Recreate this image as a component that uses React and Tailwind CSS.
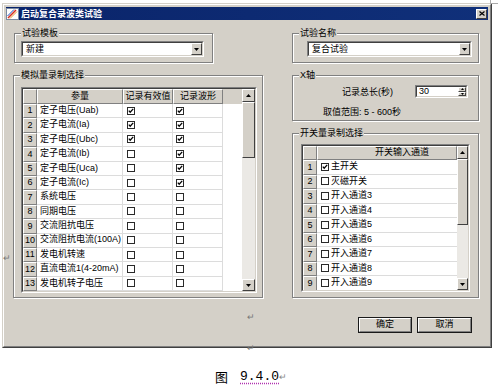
import React from "react";

const FONT = "font-['Liberation_Sans','Noto_Sans_CJK_SC',sans-serif]";
const raised =
  "border border-t-white border-l-white border-r-[#404040] border-b-[#404040] bg-[#d4d0c8]";
const cellRaised =
  "border border-t-white border-l-white border-r-[#808080] border-b-[#808080] bg-[#d4d0c8]";

const params = [
  { name: "定子电压(Uab)", value: true, wave: true },
  { name: "定子电流(Ia)", value: true, wave: true },
  { name: "定子电压(Ubc)", value: true, wave: true },
  { name: "定子电流(Ib)", value: false, wave: true },
  { name: "定子电压(Uca)", value: false, wave: true },
  { name: "定子电流(Ic)", value: false, wave: true },
  { name: "系统电压", value: false, wave: false },
  { name: "同期电压", value: false, wave: false },
  { name: "交流阻抗电压", value: false, wave: false },
  { name: "交流阻抗电流(100A)", value: false, wave: false },
  { name: "发电机转速", value: false, wave: false },
  { name: "直流电流1(4-20mA)", value: false, wave: false },
  { name: "发电机转子电压", value: false, wave: false },
];

const channels = [
  { name: "主开关", on: true },
  { name: "灭磁开关", on: false },
  { name: "开入通道3", on: false },
  { name: "开入通道4", on: false },
  { name: "开入通道5", on: false },
  { name: "开入通道6", on: false },
  { name: "开入通道7", on: false },
  { name: "开入通道8", on: false },
  { name: "开入通道9", on: false },
];

function Check({ on }) {
  return (
    <svg width="8" height="8" viewBox="0 0 8 8" className="shrink-0">
      <rect x="0.5" y="0.5" width="7" height="7" fill="#fff" stroke="#2a2a2a" />
      {on && <path d="M1.8 3.6 L3.2 5.2 L6.2 1.9" fill="none" stroke="#000" strokeWidth="1.3" />}
    </svg>
  );
}

function Tri({ up }) {
  return (
    <svg width="5" height="3" viewBox="0 0 5 3">
      <path d={up ? "M0 3H5L2.5 0Z" : "M0 0H5L2.5 3Z"} fill="#000" />
    </svg>
  );
}

function Group({ label, className, children }) {
  return (
    <div className={`relative border border-[#808080] shadow-[inset_1px_1px_0_#fff,1px_1px_0_#fff] ${className}`}>
      <span className="absolute -top-[7px] left-[6px] bg-[#d4d0c8] px-[1px] leading-[12px]">{label}</span>
      {children}
    </div>
  );
}

function Combo({ value, className }) {
  return (
    <div className={`border border-t-[#808080] border-l-[#808080] border-r-white border-b-white ${className}`}>
      <div className="flex h-full border border-t-[#404040] border-l-[#404040] border-r-[#d4d0c8] border-b-[#d4d0c8] bg-white">
        <span className="flex-1 pl-[3px] leading-[12px]">{value}</span>
        <div className={`flex w-[11px] items-center justify-center ${raised}`}>
          <Tri />
        </div>
      </div>
    </div>
  );
}

function ScrollBar({ width, thumb }) {
  return (
    <div className={`flex flex-col bg-[#ebe9e5] ${width}`}>
      <div className={`flex h-[13px] items-center justify-center ${raised}`}>
        <Tri up />
      </div>
      <div className={`${thumb} ${raised}`} />
      <div className="flex-1" />
      <div className={`flex h-[12px] items-center justify-center ${raised}`}>
        <Tri />
      </div>
    </div>
  );
}

function Button({ label, width }) {
  return (
    <div className={`h-[16px] ${width} border border-[#1a1a1a]`}>
      <div className="flex h-full items-center justify-center border border-t-white border-l-white border-r-[#808080] border-b-[#808080] bg-[#d4d0c8]">
        {label}
      </div>
    </div>
  );
}

export default function App() {
  return (
    <div className={`relative h-[390px] w-[498px] overflow-hidden bg-white text-[9px] text-black ${FONT}`}>
      <div className="ml-[2px] mt-[3px] h-[345px] w-[490px] border border-t-[#d4d0c8] border-l-[#d4d0c8] border-r-[#404040] border-b-[#404040] bg-[#d4d0c8]">
        <div className="h-full border border-t-white border-l-white border-r-[#808080] border-b-[#808080] p-[2px]">
          {/* title bar */}
          <div className="flex h-[13px] items-center bg-gradient-to-r from-[#0a246a] to-[#10307a] pr-[1px]">
            <svg width="13" height="12" viewBox="0 0 13 12" className="shrink-0">
              <rect x="0.5" y="0.5" width="12" height="11" fill="#fff" stroke="#7a8aa0" />
              <path d="M2 10 L10 2" stroke="#d83020" strokeWidth="1.6" />
              <path d="M4 10.5 L11 3.5" stroke="#e8a030" strokeWidth="1" />
              <path d="M1.5 8 L8 1.5" stroke="#2050c0" strokeWidth="1" />
            </svg>
            <span className="ml-[2px] font-bold leading-[12px] text-white">启动复合录波类试验</span>
            <div className={`ml-auto flex h-[10px] w-[11px] items-center justify-center ${raised}`}>
              <svg width="6" height="5" viewBox="0 0 6 5">
                <path d="M0.5 0.5 L5.5 4.5 M5.5 0.5 L0.5 4.5" stroke="#000" strokeWidth="1.2" />
              </svg>
            </div>
          </div>

          {/* body */}
          <div className="flex pl-[7px] pt-[13px]">
            <div className="w-[250px]">
              <Group label="试验模板" className="ml-[1px] h-[30px] w-[199px] pl-[6px] pt-[7px]">
                <Combo value="新建" className="h-[16px] w-[183px]" />
              </Group>

              <Group label="模拟量录制选择" className="mt-[12px] h-[223px] w-[250px] pl-[7px] pt-[11px]">
                <div className="h-[206px] w-[236px] border border-t-[#808080] border-l-[#808080] border-r-white border-b-white">
                  <div className="flex h-full border border-t-[#404040] border-l-[#404040] border-r-[#d4d0c8] border-b-[#d4d0c8]">
                    <div className="flex flex-1 flex-col overflow-hidden">
                      <div className="flex h-[15px] shrink-0">
                        <div className={`w-[14px] ${cellRaised}`} />
                        <div className={`flex w-[86px] items-center justify-center ${cellRaised}`}>参量</div>
                        <div className={`flex w-[50px] items-center justify-center ${cellRaised}`}>记录有效值</div>
                        <div className={`flex w-[50px] items-center justify-center ${cellRaised}`}>记录波形</div>
                        <div className="flex-1 bg-[#d4d0c8]" />
                      </div>
                      <div className="flex-1 overflow-hidden bg-white">
                        {params.map((p, i) => (
                          <div key={i} className="flex h-[14.4px]">
                            <div className={`flex w-[14px] items-center justify-center ${cellRaised}`}>{i + 1}</div>
                            <div className="flex w-[86px] items-center border-b border-r border-[#dcdcdc] pl-[3px] whitespace-nowrap">
                              {p.name}
                            </div>
                            <div className="flex w-[50px] items-center border-b border-r border-[#dcdcdc] pl-[4px]">
                              <Check on={p.value} />
                            </div>
                            <div className="flex w-[50px] items-center border-b border-r border-[#dcdcdc] pl-[3px]">
                              <Check on={p.wave} />
                            </div>
                            <div className="flex-1" />
                          </div>
                        ))}
                      </div>
                    </div>
                    <ScrollBar width="w-[13px]" thumb="h-[56px]" />
                  </div>
                </div>
              </Group>
            </div>

            <div className="ml-[29px] w-[187px]">
              <Group label="试验名称" className="h-[30px] w-[187px] pl-[14px] pt-[7px]">
                <Combo value="复合试验" className="h-[16px] w-[165px]" />
              </Group>

              <Group label="X轴" className="mt-[12px] h-[46px] w-[187px] pt-[9px]">
                <div className="flex h-[13px] items-center pl-[49px] pr-[10px]">
                  <span className="leading-[12px]">记录总长(秒)</span>
                  <div className="ml-auto h-[13px] w-[53px] border border-t-[#808080] border-l-[#808080] border-r-white border-b-white">
                    <div className="flex h-full border border-t-[#404040] border-l-[#404040] border-r-[#d4d0c8] border-b-[#d4d0c8] bg-white">
                      <span className="flex-1 pl-[2px] leading-[9px]">30</span>
                      <div className="flex w-[8px] flex-col">
                        <div className={`flex flex-1 items-center justify-center ${raised}`}>
                          <svg width="3" height="2" viewBox="0 0 3 2"><path d="M0 2H3L1.5 0Z" fill="#000" /></svg>
                        </div>
                        <div className={`flex flex-1 items-center justify-center ${raised}`}>
                          <svg width="3" height="2" viewBox="0 0 3 2"><path d="M0 0H3L1.5 2Z" fill="#000" /></svg>
                        </div>
                      </div>
                    </div>
                  </div>
                </div>
                <div className="mt-[8px] pl-[30px] leading-[12px]">取值范围: 5 - 600秒</div>
              </Group>

              <Group label="开关量录制选择" className="mt-[12px] h-[165px] w-[187px] pl-[8px] pt-[10px]">
                <div className="h-[148px] w-[169px] border border-t-[#808080] border-l-[#808080] border-r-white border-b-white">
                  <div className="flex h-full border border-t-[#404040] border-l-[#404040] border-r-[#d4d0c8] border-b-[#d4d0c8]">
                    <div className="flex flex-1 flex-col overflow-hidden">
                      <div className="flex h-[14px] shrink-0">
                        <div className={`w-[14px] ${cellRaised}`} />
                        <div className={`flex flex-1 items-center justify-center pl-[30px] ${cellRaised}`}>开关输入通道</div>
                      </div>
                      <div className="flex-1 overflow-hidden bg-white">
                        {channels.map((c, i) => (
                          <div key={i} className="flex h-[14.5px]">
                            <div className={`flex w-[14px] items-center justify-center ${cellRaised}`}>{i + 1}</div>
                            <div className="flex flex-1 items-center gap-[2px] border-b border-[#dcdcdc] pl-[4px]">
                              <Check on={c.on} />
                              <span>{c.name}</span>
                            </div>
                          </div>
                        ))}
                      </div>
                    </div>
                    <ScrollBar width="w-[11px]" thumb="h-[66px]" />
                  </div>
                </div>
              </Group>
            </div>
          </div>

          {/* buttons */}
          <div className="mt-[19px] flex justify-end gap-[5px] pr-[16px]">
            <Button label="确定" width="w-[54px]" />
            <Button label="取消" width="w-[55px]" />
          </div>
        </div>
      </div>

      {/* caption */}
      <div className="mt-[21px] flex items-end justify-center pl-[4px] leading-[16px]">
        <span className="text-[13px] font-['Noto_Sans_CJK_SC',sans-serif]">图</span>
        <span className="ml-[12px] font-['Liberation_Mono',monospace] text-[13px] underline decoration-[#b030b0] decoration-dotted underline-offset-[3px]">
          9.4.0
        </span>
        <span className="text-[9px] text-[#888]">↵</span>
      </div>

      {/* document marks over the picture */}
      <span className="absolute left-[247px] top-[311px] text-[9px] text-[#777]">↵</span>
      <span className="absolute left-[247px] top-[342px] text-[9px] text-[#777]">↵</span>
      <span className="absolute left-[3px] top-[252px] text-[9px] text-[#777]">↵</span>
      <div className="absolute left-[490px] top-0 h-[4px] w-[8px] border-b border-l border-[#aaa]" />
    </div>
  );
}
